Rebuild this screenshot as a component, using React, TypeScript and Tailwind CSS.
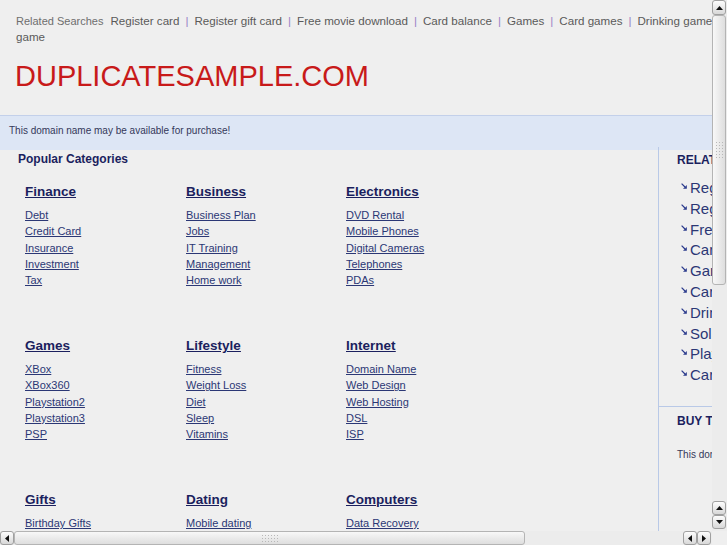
import React from "react";

type Dir = "up" | "down" | "left" | "right";

const Arrow = ({ dir }: { dir: Dir }) => {
  const vert = dir === "up" || dir === "down";
  const w = vert ? 7 : 4;
  const h = vert ? 4 : 7;
  const pts =
    dir === "up"
      ? "0,4 3.5,0 7,4"
      : dir === "down"
      ? "0,0 7,0 3.5,4"
      : dir === "left"
      ? "4,0 4,7 0,3.5"
      : "0,0 0,7 4,3.5";
  return (
    <svg width={w} height={h} viewBox={`0 0 ${w} ${h}`}>
      <polygon points={pts} fill="#111" />
    </svg>
  );
};

const Btn = ({ dir, className }: { dir: Dir; className: string }) => (
  <div
    className={
      "flex shrink-0 items-center justify-center rounded-[3px] border border-[#a0a0a0] bg-linear-to-b from-[#fdfdfd] to-[#d8d8d8] " +
      className
    }
  >
    <Arrow dir={dir} />
  </div>
);

const Grip = ({ cols, rows }: { cols: number; rows: number }) => {
  const dots: React.ReactElement[] = [];
  for (let r = 0; r < rows; r++)
    for (let c = 0; c < cols; c++)
      dots.push(<rect key={r + "-" + c} x={c * 3} y={r * 3} width={1} height={1} fill="#b8b8b8" />);
  return (
    <svg width={cols * 3 - 2} height={rows * 3 - 2} viewBox={`0 0 ${cols * 3 - 2} ${rows * 3 - 2}`}>
      {dots}
    </svg>
  );
};

const BulletArrow = () => (
  <svg width="6" height="6" viewBox="0 0 6 6" className="mt-[5px] shrink-0">
    <line x1="0.6" y1="0.6" x2="4" y2="4" stroke="#2a3a8c" strokeWidth="1.2" />
    <polygon points="5.8,2 5.8,5.8 2,5.8" fill="#2a3a8c" />
  </svg>
);

const related = [
  "Register card",
  "Register gift card",
  "Free movie download",
  "Card balance",
  "Games",
  "Card games",
  "Drinking game",
  "Solitaire",
  "Playing cards",
  "Card game",
];

const categories: { title: string; links: string[] }[] = [
  { title: "Finance", links: ["Debt", "Credit Card", "Insurance", "Investment", "Tax"] },
  { title: "Business", links: ["Business Plan", "Jobs", "IT Training", "Management", "Home work"] },
  { title: "Electronics", links: ["DVD Rental", "Mobile Phones", "Digital Cameras", "Telephones", "PDAs"] },
  { title: "Games", links: ["XBox", "XBox360", "Playstation2", "Playstation3", "PSP"] },
  { title: "Lifestyle", links: ["Fitness", "Weight Loss", "Diet", "Sleep", "Vitamins"] },
  { title: "Internet", links: ["Domain Name", "Web Design", "Web Hosting", "DSL", "ISP"] },
  { title: "Gifts", links: ["Birthday Gifts", "Flowers", "Gift Baskets", "Wedding Gifts", "Jewelry"] },
  { title: "Dating", links: ["Mobile dating", "Online dating", "Singles", "Chat", "Match Making"] },
  { title: "Computers", links: ["Data Recovery", "Laptops", "Software", "Hardware", "Printers"] },
];

export default function App() {
  return (
    <div className="grid h-[545px] w-[727px] grid-cols-[712px_15px] grid-rows-[531px_14px] overflow-hidden bg-[#efefef] font-['Liberation_Sans',Arial,sans-serif]">
      {/* viewport */}
      <div className="overflow-hidden">
        <div className="w-[930px]">
          <header className="border-b border-[#c3d0ea] pb-[23px]">
            <div className="w-[905px] pl-4 pt-[13px] text-[11.6px] leading-4 text-[#5a5a5a]">
              <span className="mr-[7px] text-[11px] text-[#6e6e6e]">Related Searches</span>
              {related.map((t, i) => (
                <React.Fragment key={t}>
                  {i > 0 && <span className="px-[6px] text-[#9a84c6]">|</span>}
                  <a className="cursor-pointer">{t}</a>
                </React.Fragment>
              ))}
            </div>
            <h1 className="mt-[15px] pl-[15px] text-[29px] leading-8 text-[#c81a1a]">DUPLICATESAMPLE.COM</h1>
          </header>

          <div className="h-[34px] bg-[#dde6f5] pl-[9px] pt-[9px] text-[10px] leading-3 text-[#34385a]">
            This domain name may be available for purchase!
          </div>

          <div className="flex">
            <div className="w-[658px] shrink-0 pt-px">
              <div className="pl-[18px] text-[12px] font-bold leading-4 text-[#1b1f5e]">Popular Categories</div>
              <div className="mt-4 grid grid-cols-[161px_160px_160px] pl-[25px]">
                {categories.map((c) => (
                  <div key={c.title} className="h-[154px]">
                    <a className="block text-[13.5px] font-bold leading-[18px] text-[#1b1f5e] underline">
                      <span className="underline">{c.title}</span>
                    </a>
                    <ul className="mt-[6px] text-[11px] leading-[16.3px] text-[#2b3775]">
                      {c.links.map((l) => (
                        <li key={l}>
                          <a className="cursor-pointer underline">{l}</a>
                        </li>
                      ))}
                    </ul>
                  </div>
                ))}
              </div>
            </div>

            <aside className="-mt-[3px] min-h-[420px] flex-1 border-l border-[#b9c9e7] pt-[5px]">
              <div className="pl-[18px] text-[12px] font-bold leading-4 text-[#1b1f5e]">RELATED SEARCHES</div>
              <ul className="mt-[10px] pl-[22px] text-[15px] leading-[20.8px] text-[#2b3775]">
                {related.map((t) => (
                  <li key={t} className="flex items-start gap-[3px]">
                    <BulletArrow />
                    <a className="cursor-pointer">{t}</a>
                  </li>
                ))}
              </ul>
              <div className="mt-5 border-t border-[#b9c9e7] pl-[18px] pt-[6px]">
                <div className="text-[12px] font-bold leading-4 text-[#1b1f5e]">BUY THIS DOMAIN</div>
                <p className="mt-5 text-[10px] leading-3 text-[#34385a]">This domain may be for sale!</p>
              </div>
            </aside>
          </div>
        </div>
      </div>

      {/* vertical scrollbar */}
      <div className="flex flex-col bg-[#ececec] pr-px">
        <Btn dir="up" className="h-[15px]" />
        <div className="flex h-[270px] items-center justify-center rounded-[3px] border border-[#b4b4b4] bg-linear-to-r from-[#f8f8f8] to-[#dedede]">
          <Grip cols={3} rows={6} />
        </div>
        <div className="flex-1" />
        <Btn dir="up" className="h-[14px]" />
        <Btn dir="down" className="mb-[2px] h-[14px]" />
      </div>

      {/* horizontal scrollbar */}
      <div className="flex bg-[#ececec]">
        <Btn dir="left" className="w-[14px]" />
        <div className="flex w-[511px] items-center justify-center rounded-[3px] border border-[#b4b4b4] bg-linear-to-b from-[#f8f8f8] to-[#dedede]">
          <Grip cols={6} rows={3} />
        </div>
        <div className="flex-1" />
        <Btn dir="left" className="w-[14px]" />
        <Btn dir="right" className="mr-px w-[14px]" />
      </div>

      {/* corner */}
      <div className="bg-[#efefef]" />
    </div>
  );
}
